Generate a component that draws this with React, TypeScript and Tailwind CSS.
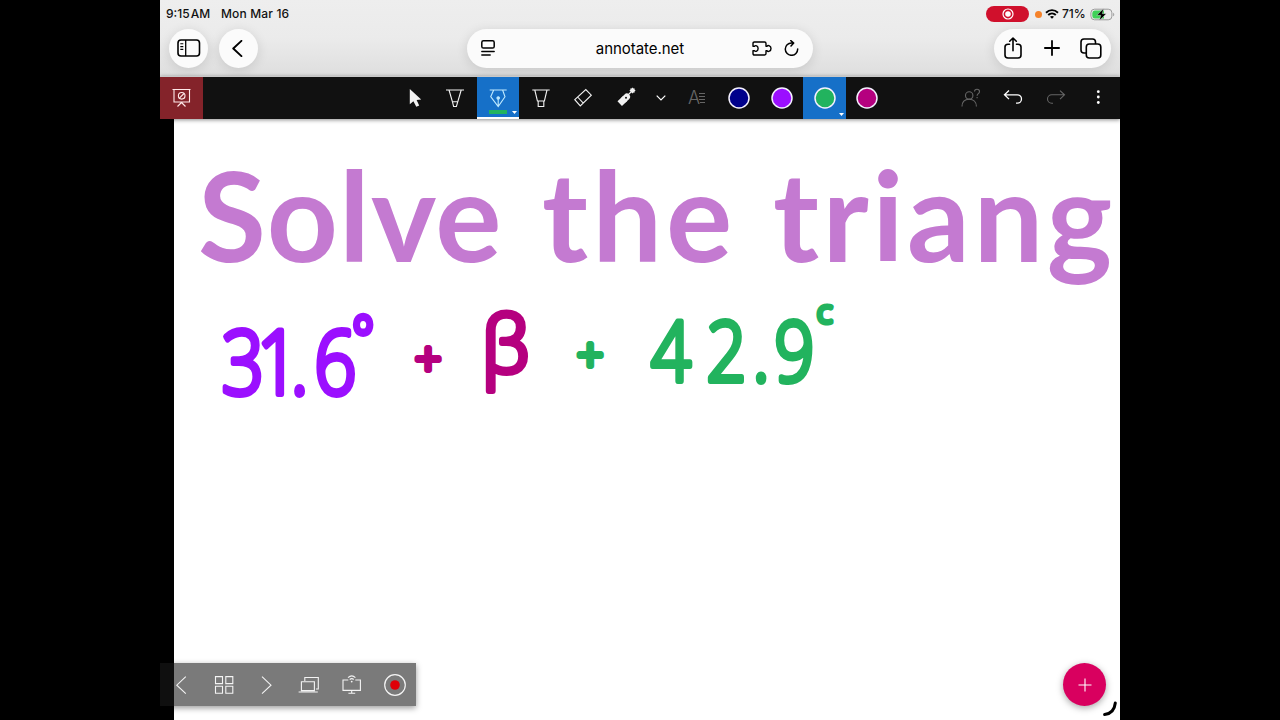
import { useState } from "react";

interface IconProps {
  children: React.ReactNode;
  className?: string;
}

// All toolbar glyphs share a 42px box with its origin in the middle
const Icon: React.FC<IconProps> = ({ children, className = "text-white" }) => (
  <svg
    className={`w-[42px] h-[42px] shrink-0 ${className}`}
    viewBox="-21 -21 42 42"
    fill="none"
    stroke="currentColor"
    strokeWidth="1.1"
  >
    {children}
  </svg>
);

const Caret = () => (
  <svg className="absolute right-[2px] bottom-[3px] w-[5px] h-[3px]" viewBox="0 0 5 3">
    <path d="M0 0h5L2.5 3z" fill="#fff" />
  </svg>
);

const icons = {
  board: (
    <>
      <path d="M-8.5 -8.5h18M-7 -8.5v12.5h15.5v-12.5M.5 4.5l-4 4M.5 4.5l4 4" />
      <circle cx=".7" cy="-2.2" r="3.3" />
      <path d="M-1.6 0.1l4.6 -4.6" />
    </>
  ),
  pointer: (
    <path d="M-3.2 -9v15.3l3.6-3 2.9 5.4 2.9-1.2-2.6-5.4 4.6-.5z" fill="currentColor" stroke="none" />
  ),
  pencil: <path d="M-9 -8h18M-6 -8l3.4 11.7h5.4L6.2 -8M-2.6 3.7l1.2 4.8h2.8l1.4-4.8" />,
  pen: (
    <>
      <path d="M-8.3 -8h17M-4.3 -8l-3 6.7L0.2 8.6 7 -1.3 4.6 -8M.2 8.6v-7" />
      <circle cx="0.2" cy="0" r="1.2" fill="currentColor" />
    </>
  ),
  marker: <path d="M-8.7 -8h17.4M-6.2 -8l2.6 11h7l2.6-11M-2.8 3v5.5h5.6V3" />,
  eraser: <path d="M-8.2 1.7l11-10.2 5.5 5.7L-2.7 7.9zM-5.4 -1l5.7 6.2" />,
  laser: (
    <>
      <path d="M-6.3 5.6L-1 .6" strokeWidth="6.5" />
      <path d="M-2 1.5L.8 -1.2" strokeWidth="6.5" strokeLinecap="round" />
      <path d="M1 -2l5.5-5.5M6.5 -10.3v5.6M3.7 -7.5h5.6M4.6 -9.4l3.8 3.8M8.4 -9.4l-3.8 3.8" />
      <circle cx="6.5" cy="-7.5" r="1.8" fill="currentColor" />
      <circle cx="0" cy="-.2" r="1" fill="#111" stroke="none" />
    </>
  ),
  user: (
    <>
      <circle cx="-1.8" cy="-2.6" r="3.7" />
      <path d="M-9 8.6c0-4.8 3-7.3 7.2-7.3s7.2 2.5 7.2 7.3M3.5 -6.4c0-3.3 5-3.1 5-.2 0 2.4-2.4 2-2.4 4.4M6.1 -.9v1.2" />
    </>
  ),
  undo: <path d="M-4 -7.4l-4.5 4.2 4.5 4.3M-8.5 -3.2H4.3a4.2 4.2 0 0 1 0 8.4H3" strokeWidth="1.3" />,
  redo: <path d="M4 -7.4l4.5 4.2L4 1.1M8.5 -3.2H-4.3a4.2 4.2 0 0 0 0 8.4H-3" />,
  more: (
    <g fill="currentColor" stroke="none">
      <circle cx="-.7" cy="-6.3" r="1.4" />
      <circle cx="-.7" cy="-1" r="1.4" />
      <circle cx="-.7" cy="4.5" r="1.4" />
    </g>
  ),
  prev: <path d="M4.8 -8.3l-9 8.5 9 8.5" />,
  next: <path d="M-5 -8.3l9 8.5-9 8.5" />,
  grid: <path d="M-8.5 -8.4h7v7h-7zM1.8 -8.4h7v7h-7zM-8.5 1.3h7v7h-7zM1.8 1.3h7v7h-7z" />,
  screens: <path d="M-7.6 -3.3h13V5.6h-13zM-10.4 7h19.2M-4.2 -4v-3.5H9.3v11.5H7" />,
  cast: (
    <>
      <path d="M-3.7 -5h-5.3V5.4H8.4V-5H3.3M-.3 5.4v2.8M-3.6 8.3h6.8" />
      <path d="M-4 -7.4c2.2-2 5.3-2 7.4 0M-2.3 -5.5c1.3-1.1 2.8-1.1 4 0" />
      <circle cx="-.3" cy="-3.4" r="0.9" fill="currentColor" stroke="none" />
    </>
  ),
  record: (
    <>
      <circle r="10.3" strokeWidth="1.2" />
      <circle r="4.8" fill="#e00008" stroke="none" />
    </>
  ),
};

const tools = [
  { id: "pointer", icon: icons.pointer },
  { id: "pencil", icon: icons.pencil },
  { id: "pen", icon: icons.pen },
  { id: "marker", icon: icons.marker },
  { id: "eraser", icon: icons.eraser },
  { id: "laser", icon: icons.laser },
];

const colors = ["#00008b", "#9b0fff", "#22b35e", "#b5007f"];

const StatusBar = () => (
  <div className="flex h-7 items-center pl-[6px] pr-[5px] text-[12px] font-medium leading-none text-[#111]">
    <span className="w-[55px] whitespace-nowrap">9:15&#8202;AM</span>
    <span className="tracking-[0.15px]">Mon Mar 16</span>
    <div className="ml-auto flex items-center">
      <div className="flex h-4 w-[43px] items-center justify-center rounded-full bg-[#d0102c]">
        <svg className="w-3 h-3" viewBox="0 0 12 12" fill="none" stroke="#fff" strokeWidth="1.2">
          <circle cx="6" cy="6" r="5" />
          <circle cx="6" cy="6" r="2.2" fill="#fff" />
        </svg>
      </div>
      <span className="ml-[6px] h-[7px] w-[7px] rounded-full bg-[#f5822a]" />
      <svg className="ml-[3px] h-[10px] w-[14px]" viewBox="0 0 14 10" fill="none" stroke="#000" strokeWidth="1.9">
        <path d="M1 3.7c3.5-3.4 8.5-3.4 12 0M3.2 6c2.2-2.1 5.4-2.1 7.6 0" />
        <path d="M7 9.8L5 7.8c1.2-1.1 2.8-1.1 4 0z" fill="#000" stroke="none" />
      </svg>
      <span className="ml-[3px] w-[28px]">71%</span>
      <svg className="h-[13px] w-[25px]" viewBox="0 0 25 13">
        <rect x="0.9" y="1.2" width="21" height="10.6" rx="3.6" fill="none" stroke="#9a9a9a" />
        <path d="M5 2.5h9v8H5A2.6 2.6 0 0 1 2.3 8V5A2.6 2.6 0 0 1 5 2.5z" fill="#3fd158" />
        <path d="M23.2 4.7c1.4.5 1.4 3.1 0 3.6z" fill="#9a9a9a" />
        <path d="M13.6.5L6.8 7.3h4L9.4 12.6l6.9-6.9h-4z" fill="#000" stroke="#eee" strokeWidth=".4" />
      </svg>
    </div>
  </div>
);

const BrowserBar = () => (
  <div className="flex h-10 items-center pl-[9px] pr-[9px] text-black">
    <button className="flex h-[39px] w-[39px] items-center justify-center rounded-full bg-[#fbfbfb] shadow-[0_2px_12px_rgba(0,0,0,0.12)]">
      <svg className="h-[18px] w-6" viewBox="0 0 24 18" fill="none" stroke="currentColor" strokeWidth="1.6">
        <rect x="1" y="1" width="21.5" height="16" rx="3" />
        <path d="M8.7 1v16" strokeWidth="1.3" />
        <path d="M3.3 4.8h3M3.3 7.6h3M3.3 10.4h3" strokeWidth="1.1" />
      </svg>
    </button>
    <button className="ml-[11px] flex h-[39px] w-[39px] items-center justify-center rounded-full bg-[#fbfbfb] shadow-[0_2px_12px_rgba(0,0,0,0.12)]">
      <svg className="-ml-[2px] h-[17px] w-[11px]" viewBox="0 0 10 16" fill="none" stroke="currentColor" strokeWidth="1.8">
        <path d="M8.7.8L1 8l7.7 7.2" strokeLinecap="round" strokeLinejoin="round" />
      </svg>
    </button>

    <div className="ml-[209px] flex h-[39px] w-[346px] items-center rounded-full bg-[#fbfbfb] pl-[14px] pr-[14px] shadow-[0_2px_12px_rgba(0,0,0,0.12)]">
      <svg className="h-4 w-[14px]" viewBox="0 0 14 16" fill="none" stroke="currentColor" strokeWidth="1.5" strokeLinecap="round">
        <rect x=".8" y=".8" width="12.4" height="7.2" rx="1.6" />
        <path d="M.8 11.5h12.4M.8 15h8.4" strokeWidth="1.4" />
      </svg>
      <span className="ml-auto mr-auto pl-[33px] text-[15px] leading-none tracking-[-0.05px]">annotate.net</span>
      <svg className="h-[15px] w-5" viewBox="0 0 20 15" fill="none" stroke="currentColor" strokeWidth="1.4" strokeLinejoin="round">
        <path d="M1 5.2V2.4Q1 1 2.4 1H12.6Q14 1 14 2.4V5.2H15.2C16 3.8 19 4.7 19 7.5S16 11.2 15.2 9.8H14V12.6Q14 14 12.6 14H2.4Q1 14 1 12.6V9.8H2.5C3.5 11 6.1 10 6.1 7.5S3.5 4 2.5 5.2z" />
      </svg>
      <svg className="ml-[12px] h-4 w-[15px]" viewBox="0 0 15 16" fill="none" stroke="currentColor" strokeWidth="1.5" strokeLinecap="round" strokeLinejoin="round">
        <path d="M13.7 9A6.2 6.2 0 1 1 7.5 2.9H9.6M6.8.6L9.7 3 7 6" />
      </svg>
    </div>

    <div className="ml-auto flex h-[39px] w-[117px] items-center justify-between rounded-full bg-[#fbfbfb] pl-[10px] pr-[9px] shadow-[0_2px_12px_rgba(0,0,0,0.12)]">
      <svg className="h-[22px] w-[18px] -mt-[1px]" viewBox="0 0 18 22" fill="none" stroke="currentColor" strokeWidth="1.6" strokeLinecap="round" strokeLinejoin="round">
        <path d="M5.5 7.2H4Q1 7.2 1 10v8q0 3 3 3h10q3 0 3-3v-8q0-2.8-3-2.8h-1.5M9 13.8V1M5.7 4.2L9 1l3.3 3.2" />
      </svg>
      <svg className="ml-[2px] h-4 w-4" viewBox="0 0 16 16" stroke="currentColor" strokeWidth="1.8" strokeLinecap="round">
        <path d="M8 .9v14.2M.9 8h14.2" />
      </svg>
      <svg className="h-[21px] w-[22px]" viewBox="0 0 22 21" fill="none" stroke="currentColor" strokeWidth="1.6">
        <rect x="6.3" y="6" width="14.5" height="14" rx="3" />
        <path d="M6.3 15H4Q1 15 1 12V4q0-3 3-3h8.5q3 0 3 3v2" />
      </svg>
    </div>
  </div>
);

const Toolbar = () => {
  const [tool, setTool] = useState("pen");
  const [color, setColor] = useState("#22b35e");

  return (
    <div className="relative z-10 flex h-[43px] w-full border-t border-[#c8c8c8] bg-[#111] shadow-[0_1px_4px_rgba(0,0,0,0.45)]">
      <button className="flex w-[42.67px] items-center justify-center bg-[#84232a]">
        <Icon className="text-[#ffe9e9]">{icons.board}</Icon>
      </button>
      <div className="ml-[188.67px] flex">
        {tools.map(({ id, icon }) => (
          <button
            key={id}
            onClick={() => setTool(id)}
            className={`relative flex w-[42.67px] items-center justify-center ${
              tool === id ? "bg-[#1670c8] border-b-2 border-white" : ""
            }`}
          >
            <Icon className={tool === id ? "text-[#bfeaff] mt-[2px]" : "text-[#f2f2f2]"}>{icon}</Icon>
            {tool === id && (
              <>
                <span className="absolute bottom-[3px] left-[12px] h-[4px] w-[18px]" style={{ backgroundColor: color }} />
                <Caret />
              </>
            )}
          </button>
        ))}
        <button className="flex w-[28px] items-center justify-center">
          <svg className="h-[6px] w-[10px]" viewBox="0 0 10 6" fill="none" stroke="#fff" strokeWidth="1.2">
            <path d="M.7.7L5 5 9.3.7" />
          </svg>
        </button>
        <button className="flex w-[42.67px] items-center justify-center text-[#666]">
          <span className="text-[18px] font-light leading-none">A</span>
          <svg className="h-3 w-[6px] -ml-px mb-px" viewBox="0 0 6 12" stroke="currentColor">
            <path d="M0 1.5h6M0 4.5h6M0 7.5h6M1 10.5h5" />
          </svg>
        </button>
        {colors.map((c) => (
          <button
            key={c}
            onClick={() => setColor(c)}
            className={`relative flex w-[42.67px] items-center justify-center ${color === c ? "bg-[#1670c8]" : ""}`}
          >
            <svg className="mb-px h-[22px] w-[22px]" viewBox="0 0 22 22">
              <circle cx="11" cy="11" r="10" fill={c} stroke="#f4f0ff" strokeWidth="1.5" />
            </svg>
            {color === c && <Caret />}
          </button>
        ))}
      </div>
      <div className="ml-auto flex">
        <button className="flex w-[42.67px] items-center justify-center">
          <Icon className="text-[#666]">{icons.user}</Icon>
        </button>
        <button className="flex w-[42.67px] items-center justify-center">
          <Icon>{icons.undo}</Icon>
        </button>
        <button className="flex w-[42.67px] items-center justify-center">
          <Icon className="text-[#666]">{icons.redo}</Icon>
        </button>
        <button className="flex w-[42.67px] items-center justify-center">
          <Icon>{icons.more}</Icon>
        </button>
      </div>
    </div>
  );
};

// Handwritten line on the board; digits are squeezed a little sideways
const Ink = () => (
  <svg
    className="absolute left-0 top-0 h-[601px] w-[946px] font-['Open_Sans',sans-serif]"
    viewBox="174 119 946 601"
    strokeLinejoin="round"
    strokeLinecap="round"
    fontWeight="300"
    strokeWidth="6"
  >
    <g fill="#9b0fff" stroke="#9b0fff">
      <text x="264 306 346 374" y="394" fontSize="88" transform="scale(.84 1)">
        31.6
        <tspan x="419" y="361" fontSize="62">°</tspan>
      </text>
    </g>
    <g fill="#b5007f" stroke="#b5007f">
      <text x="415" y="375" fontSize="46">+</text>
      <text x="482" y="372" fontSize="77">β</text>
    </g>
    <g fill="#22b35e" stroke="#22b35e">
      <text x="577" y="371" fontSize="46">+</text>
      <text x="775 841 896 922" y="381" fontSize="83" transform="scale(.84 1)">
        42.9
      </text>
      <text x="817" y="323" fontSize="32" strokeWidth="5">c</text>
    </g>
  </svg>
);

const BottomBar = () => (
  <div className="absolute left-0 bottom-[14px] z-10 flex h-[43px] w-64 bg-[#1a1a1a]/58 shadow-[0_2px_6px_rgba(0,0,0,0.4)]">
    {[icons.prev, icons.grid, icons.next, icons.screens, icons.cast, icons.record].map((icon, i) => (
      <button key={i} className="flex flex-1 items-center justify-center">
        <Icon className="text-[#f4f4f4]">{icon}</Icon>
      </button>
    ))}
  </div>
);

export default function App() {
  return (
    <div className="flex h-[720px] w-[1280px] justify-center overflow-hidden bg-black font-[Inter,sans-serif]">
      <div className="relative flex h-full w-[960px] flex-col overflow-hidden">
        <header className="h-[76px] shrink-0 bg-linear-to-b from-[#eeeeee] via-[#ebebeb] to-[#dedede]">
          <StatusBar />
          <BrowserBar />
        </header>
        <Toolbar />
        <main className="relative ml-[14px] flex-1 overflow-hidden bg-white">
          <h1 className="flex pl-[24px] pt-[7px] font-[Lato,sans-serif] text-[124px] font-bold leading-[176px] text-[#c47ad1] whitespace-nowrap">
            <span className="w-[344px] tracking-[1px]">Solve</span>
            <span className="w-[231px] tracking-[4px]">the</span>
            <span className="tracking-[3.4px]">triang</span>
          </h1>
          <Ink />
          <button className="absolute right-[14px] bottom-[14px] flex h-[43px] w-[43px] items-center justify-center rounded-full bg-[#d9005f] shadow-[0_2px_7px_rgba(0,0,0,0.35)]">
            <svg className="h-[14px] w-[14px]" viewBox="0 0 14 14" stroke="#fff" strokeWidth="1.1">
              <path d="M7 .5v13M.5 7h13" />
            </svg>
          </button>
          <svg className="absolute bottom-[3px] right-[3px] h-[16px] w-[16px]" viewBox="0 0 16 16" fill="none">
            <path d="M14.3 2C13.6 8.5 10 12.8 3.6 13.5" stroke="#000" strokeWidth="3" strokeLinecap="round" />
          </svg>
        </main>
        <BottomBar />
      </div>
    </div>
  );
}
